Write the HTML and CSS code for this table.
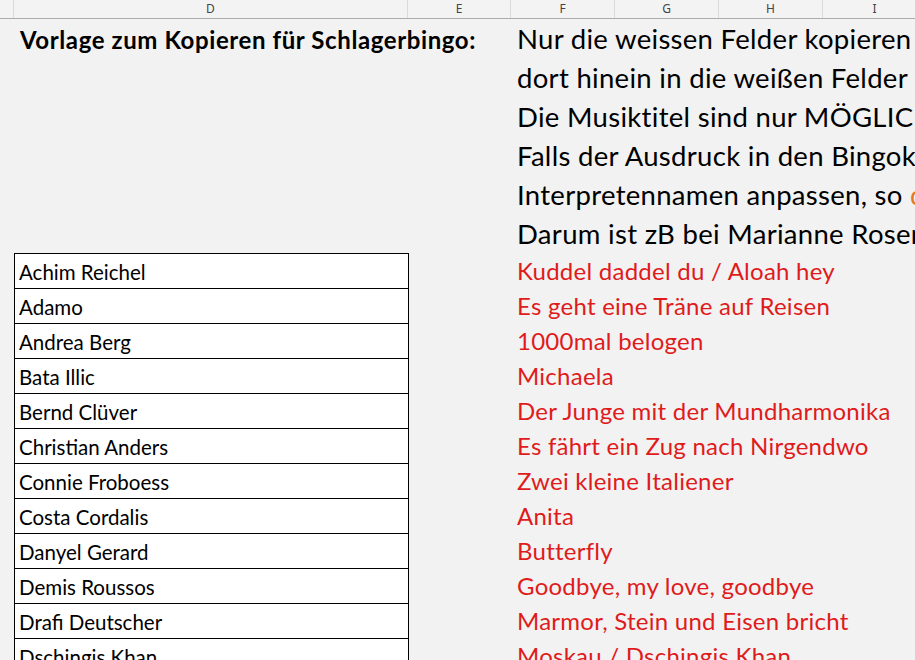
FILE: index.html
```html
<!DOCTYPE html>
<html lang="de">
<head>
<meta charset="utf-8">
<title>Schlagerbingo</title>
<link rel="stylesheet" href="styles.css">
</head>
<body>
<div class="sheet">
  <div class="colhead">
    <div class="h hc"></div>
    <div class="h hd">D</div>
    <div class="h he">E</div>
    <div class="h hf">F</div>
    <div class="h hg">G</div>
    <div class="h hh">H</div>
    <div class="h hi">I</div>
  </div>
  <div class="top">
    <div class="spacer"></div>
    <div class="title">Vorlage zum Kopieren für Schlagerbingo:</div>
    <div class="spacer-e"></div>
    <div class="notes">
      <div>Nur die weissen Felder kopieren und in die Vorlage einfügen</div>
      <div>dort hinein in die weißen Felder</div>
      <div>Die Musiktitel sind nur MÖGLICHE Titel</div>
      <div>Falls der Ausdruck in den Bingokarten zu groß ist</div>
      <div>Interpretennamen anpassen, so <span class="orange">dass es passt</span></div>
      <div>Darum ist zB bei Marianne Rosenberg</div>
    </div>
  </div>
  <div class="list">
    <div class="row"><div class="spacer"></div><div class="name">Achim Reichel</div><div class="spacer-e"></div><div class="song">Kuddel daddel du / Aloah hey</div></div>
    <div class="row"><div class="spacer"></div><div class="name">Adamo</div><div class="spacer-e"></div><div class="song">Es geht eine Träne auf Reisen</div></div>
    <div class="row"><div class="spacer"></div><div class="name">Andrea Berg</div><div class="spacer-e"></div><div class="song">1000mal belogen</div></div>
    <div class="row"><div class="spacer"></div><div class="name">Bata Illic</div><div class="spacer-e"></div><div class="song">Michaela</div></div>
    <div class="row"><div class="spacer"></div><div class="name">Bernd Clüver</div><div class="spacer-e"></div><div class="song">Der Junge mit der Mundharmonika</div></div>
    <div class="row"><div class="spacer"></div><div class="name">Christian Anders</div><div class="spacer-e"></div><div class="song">Es fährt ein Zug nach Nirgendwo</div></div>
    <div class="row"><div class="spacer"></div><div class="name">Connie Froboess</div><div class="spacer-e"></div><div class="song">Zwei kleine Italiener</div></div>
    <div class="row"><div class="spacer"></div><div class="name">Costa Cordalis</div><div class="spacer-e"></div><div class="song">Anita</div></div>
    <div class="row"><div class="spacer"></div><div class="name">Danyel Gerard</div><div class="spacer-e"></div><div class="song">Butterfly</div></div>
    <div class="row"><div class="spacer"></div><div class="name">Demis Roussos</div><div class="spacer-e"></div><div class="song">Goodbye, my love, goodbye</div></div>
    <div class="row"><div class="spacer"></div><div class="name">Drafi Deutscher</div><div class="spacer-e"></div><div class="song">Marmor, Stein und Eisen bricht</div></div>
    <div class="row"><div class="spacer"></div><div class="name">Dschingis Khan</div><div class="spacer-e"></div><div class="song">Moskau / Dschingis Khan</div></div>
  </div>
</div>
</body>
</html>
```

FILE: styles.css
```css
html, body {
  margin: 0;
  padding: 0;
  width: 915px;
  height: 660px;
  overflow: hidden;
  background: #f2f2f2;
}
.sheet {
  font-family: Lato, "Open Sans", sans-serif;
  color: #000;
}
.colhead {
  display: grid;
  grid-template-columns: 14px 394px 103px 104px 104px 104px 104px;
  height: 18px;
  border-bottom: 1px solid #ababab;
  background: #f3f3f3;
  font-family: "Noto Sans", "Liberation Sans", sans-serif;
  font-size: 12px;
  color: #444;
}
.h {
  display: flex;
  align-items: center;
  justify-content: center;
  border-right: 1px solid #dadada;
  line-height: 18px;
}
.top {
  display: grid;
  grid-template-columns: 14px 395px 102px 1fr;
  height: 234px;
}
.title {
  font-weight: 700;
  font-size: 24px;
  letter-spacing: 0.6px;
  padding: 6px 0 0 6px;
  white-space: nowrap;
  line-height: 30px;
}
.notes {
  font-size: 27.5px;
  letter-spacing: 0.3px;
  line-height: 39px;
  padding: 0 0 0 6px;
  margin-top: 0;
  white-space: nowrap;
}
.orange { color: #e8781e; }
.row {
  display: grid;
  grid-template-columns: 14px 395px 102px 1fr;
  height: 35px;
}
.name {
  background: #fff;
  border: 1px solid #000;
  border-bottom: none;
  font-size: 20.5px;
  line-height: 22px;
  padding: 7px 0 0 4px;
  white-space: nowrap;
}
.song {
  color: #e01b1b;
  font-size: 24px;
  letter-spacing: 0.25px;
  line-height: 28px;
  padding: 4px 0 0 6px;
  white-space: nowrap;
}
```
